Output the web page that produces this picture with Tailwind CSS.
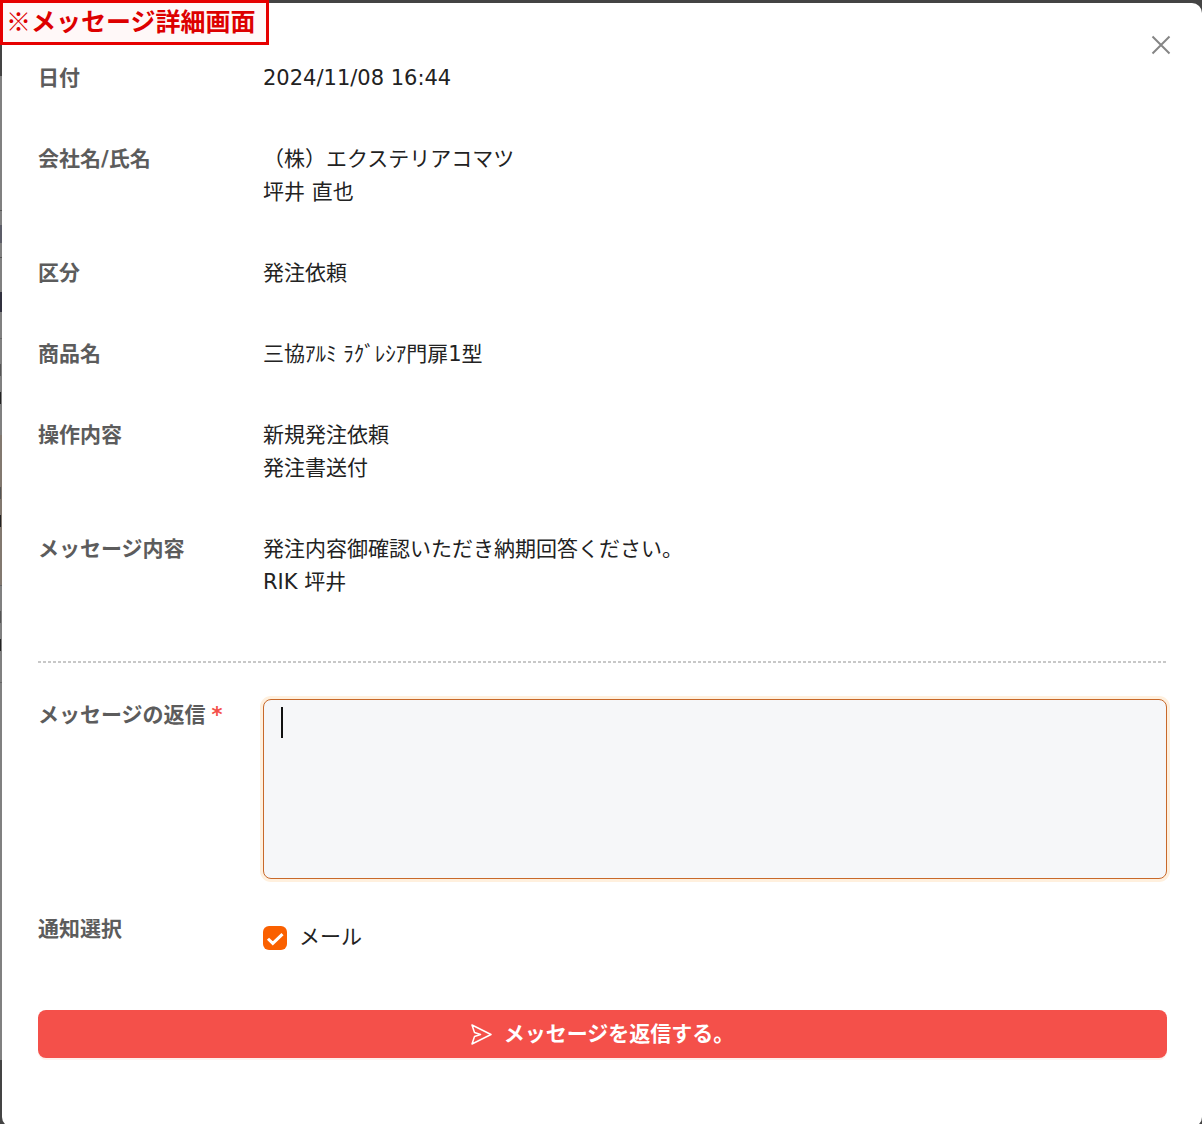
<!DOCTYPE html>
<html lang="ja">
<head>
  <meta charset="UTF-8" />
  <meta name="viewport" content="width=device-width, initial-scale=1" />
  <title>メッセージ詳細画面</title>
  <script src="https://cdn.jsdelivr.net/npm/@tailwindcss/browser@4"></script>
</head>
<body class="relative min-h-screen overflow-hidden bg-[#444444] pt-[3px] pl-[2px] font-['DejaVu_Sans','Noto_Sans_CJK_JP',sans-serif] text-[21px] leading-[33px] text-[#222222]">

  <!-- Dimmed page behind the modal -->
  <div class="absolute top-[76px] bottom-[67px] left-0 flex w-2 flex-col bg-[#808080]" aria-hidden="true">
    <div class="mt-[134px] h-px bg-[#555555]"></div>
    <div class="mt-[14px] h-[18px] bg-[#5c5d68]"></div>
    <div class="mt-[14px] h-px bg-[#555555]"></div>
    <div class="mt-[34px] h-5 bg-[#30303e]"></div>
    <div class="mt-[26px] h-px bg-[#666666]"></div>
    <div class="mt-[25px] h-3 w-px bg-[#555555]"></div>
    <div class="mt-4 h-3 w-px bg-[#222222]"></div>
    <div class="mt-[31px] flex h-[150px] flex-col bg-[#82786f]">
      <div class="mt-[52px] h-3 w-px bg-[#555555]"></div>
      <div class="mt-4 h-3 w-px bg-[#222222]"></div>
    </div>
    <div class="h-px bg-[#666666]"></div>
    <div class="mt-[25px] h-3 w-px bg-[#555555]"></div>
    <div class="mt-4 h-3 w-px bg-[#222222]"></div>
    <div class="mt-[31px] h-px bg-[#666666]"></div>
  </div>

  <main class="relative min-h-screen rounded-[10px] bg-white pt-[59px] pr-[35px] pb-[69px] pl-9" role="dialog" aria-label="メッセージ詳細">
    <button type="button" aria-label="閉じる" class="absolute top-[30px] right-[29px] p-0.5 text-[#858585]">
      <svg class="size-5" viewBox="0 0 20 20" fill="none" stroke="currentColor" stroke-width="2"><path d="M1.500 1.500l17 17M18.500 1.500l-17 17"/></svg>
    </button>

    <dl class="grid grid-cols-[225px_1fr] gap-y-12">
      <dt class="font-bold text-[#5c5c5c]">日付</dt>
      <dd>2024/11/08 16:44</dd>
      <dt class="font-bold text-[#5c5c5c]">会社名/氏名</dt>
      <dd>（株）エクステリアコマツ<br />坪井 直也</dd>
      <dt class="font-bold text-[#5c5c5c]">区分</dt>
      <dd>発注依頼</dd>
      <dt class="font-bold text-[#5c5c5c]">商品名</dt>
      <dd>三協ｱﾙﾐ ﾗｸﾞﾚｼｱ門扉1型</dd>
      <dt class="font-bold text-[#5c5c5c]">操作内容</dt>
      <dd>新規発注依頼<br />発注書送付</dd>
      <dt class="font-bold text-[#5c5c5c]">メッセージ内容</dt>
      <dd>発注内容御確認いただき納期回答ください。<br />RIK 坪井</dd>
    </dl>

    <div class="mt-[62px] h-0.5 bg-[repeating-linear-gradient(90deg,#c8c8c8_0_3px,transparent_3px_5px)]"></div>

    <form class="mt-9">
      <div class="grid grid-cols-[225px_1fr]">
        <label for="reply" class="font-bold text-[#5c5c5c]">メッセージの返信<span class="ml-1.5 text-[#f4504a]">*</span></label>
        <div class="relative">
          <textarea id="reply" required class="block h-[180px] w-full resize-none rounded-lg border border-[#c8692a] bg-[#f6f7f9] px-[17px] py-1.5 shadow-[0_0_0_3px_#fff0de] outline-none"></textarea>
          <span class="pointer-events-none absolute top-2 left-[18px] h-[31px] w-0.5 bg-[#111111]" aria-hidden="true"></span>
        </div>
      </div>

      <div class="mt-[34px] grid grid-cols-[225px_1fr]">
        <span class="font-bold text-[#5c5c5c]">通知選択</span>
        <label class="mt-2 flex items-center gap-3">
          <span class="grid size-6">
            <input type="checkbox" checked class="col-start-1 row-start-1 size-6 appearance-none rounded-md bg-[#fa6000]" />
            <svg class="pointer-events-none col-start-1 row-start-1 size-6" viewBox="0 0 24 24" fill="none" stroke="white" stroke-width="3"><path d="M5 12.700l4.800 4.700 9.700-9.300"/></svg>
          </span>
          メール
        </label>
      </div>

      <button type="submit" class="mt-14 flex h-12 w-full items-center justify-center gap-3 rounded-lg bg-[#f4504a] font-bold text-white shadow-[0_2px_0_#fff0ec]">
        <svg class="size-[21px]" viewBox="0 0 21 21" fill="none" stroke="currentColor" stroke-width="1.500" stroke-linejoin="round"><path d="M1 1l19 9.500-19 9.500 2.500-7.500 6-2-6-2z"/></svg>
        メッセージを返信する。
      </button>
    </form>
  </main>

  <div class="absolute top-0 left-0 border-3 border-[#e60000] bg-[#fff8f8] pt-px pr-[10px] pb-[6px] pl-[3px] font-['Noto_Sans_CJK_JP',sans-serif] text-[25px] leading-8 font-bold text-[#dd0000]">※メッセージ詳細画面</div>

</body>
</html>
